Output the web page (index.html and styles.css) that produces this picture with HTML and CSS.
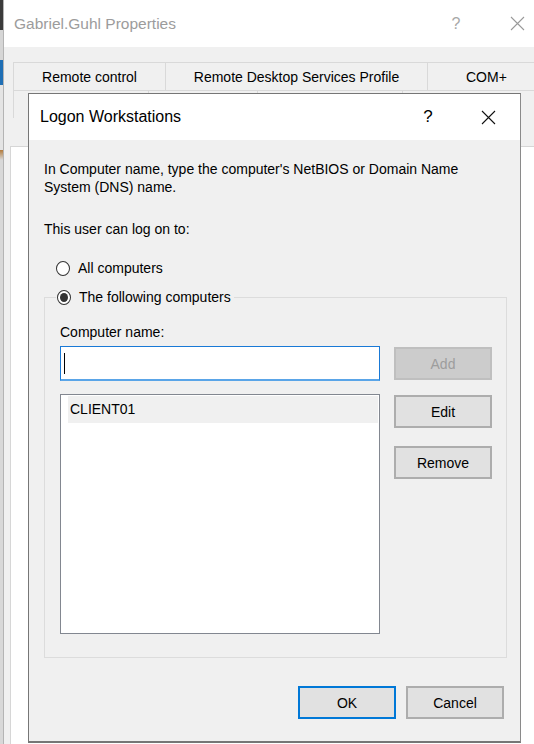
FILE: index.html
```html
<!DOCTYPE html>
<html>
<head>
<meta charset="utf-8">
<link rel="stylesheet" href="styles.css">
</head>
<body>
<div class="edge"></div>
<div class="win">
  <div class="win-title">
    <span class="win-title-text">Gabriel.Guhl Properties</span>
    <span class="tb-help">?</span>
    <span class="tb-close"><svg width="15" height="15" viewBox="0 0 15 15"><path d="M1 1L14 14M14 1L1 14" stroke="#9a9a9a" stroke-width="1.1" fill="none"/></svg></span>
  </div>
  <div class="tabs">
    <div class="tabrow">
      <div class="tab t1">Remote control</div>
      <div class="tab t2">Remote Desktop Services Profile</div>
      <div class="tab t3">COM+</div>
    </div>
    <div class="tabrow">
      <div class="tab r1"></div>
      <div class="tab r2"></div>
      <div class="tab r3"></div>
      <div class="tab r4"></div>
    </div>
  </div>
  <div class="page"></div>
</div>

<div class="dialog">
  <div class="dlg-title">
    <span class="dlg-title-text">Logon Workstations</span>
    <span class="dlg-help">?</span>
    <span class="dlg-close"><svg width="15" height="15" viewBox="0 0 15 15"><path d="M1 1L14 14M14 1L1 14" stroke="#111" stroke-width="1.1" fill="none"/></svg></span>
  </div>
  <div class="dlg-body">
    <p class="intro">In Computer name, type the computer's NetBIOS or Domain Name System (DNS) name.</p>
    <p class="lead">This user can log on to:</p>
    <div class="radio-row"><span class="radio"></span><span>All computers</span></div>
    <fieldset class="group">
      <legend class="legend"><span class="radio checked"></span><span>The following computers</span></legend>
      <div class="label">Computer name:</div>
      <div class="row-input">
        <div class="input"><span class="caret"></span></div>
        <div class="btn disabled">Add</div>
      </div>
      <div class="row-list">
        <div class="listbox">
          <div class="item">CLIENT01</div>
        </div>
        <div class="side-btns">
          <div class="btn">Edit</div>
          <div class="btn">Remove</div>
        </div>
      </div>
    </fieldset>
    <div class="footer">
      <div class="btn default">OK</div>
      <div class="btn">Cancel</div>
    </div>
  </div>
</div>
</body>
</html>
```
FILE: styles.css
```css
html, body {
  margin: 0;
  padding: 0;
}
body {
  width: 534px;
  height: 744px;
  overflow: hidden;
  display: flex;
  font-family: "Liberation Sans", Arial, sans-serif;
  font-size: 14px;
  color: #000;
  background: #d8d8d8;
  position: relative;
}
.edge {
  width: 3px;
  flex: none;
  background: linear-gradient(#3b3b3b 0, #3b3b3b 30px, #d6d6d6 30px, #d6d6d6 60px, #1f6fb5 60px, #1f6fb5 85px, #e4e4e4 85px, #e4e4e4 150px, #b27a3a 150px, #d8d8d8 160px);
}
.win {
  flex: 1;
  display: flex;
  flex-direction: column;
  background: #f0f0f0;
  border-left: 1px solid #b4b4b4;
  min-width: 0;
}
.win-title {
  height: 47px;
  flex: none;
  background: #fff;
  display: flex;
  align-items: center;
  padding-left: 10px;
  color: #9c9c9c;
  font-size: 15.5px;
}
.win-title-text {
  flex: 1;
}
.tb-help {
  width: 40px;
  text-align: center;
  font-size: 16px;
  color: #a8a8a8;
}
.tb-close {
  width: 46px;
  margin-left: 18px;
  margin-right: -6px;
  display: flex;
  justify-content: center;
}
.tabs {
  margin: 15px 0 0 9px;
}
.tabrow {
  display: flex;
  height: 28px;
}
.tab {
  box-sizing: border-box;
  border: 1px solid #d9d9d9;
  border-bottom: none;
  margin-right: -1px;
  display: flex;
  align-items: center;
  justify-content: center;
  background: #f0f0f0;
  white-space: nowrap;
}
.t1 { width: 153px; }
.t2 { width: 263px; }
.t3 { flex: 1; justify-content: flex-start; padding-left: 38px; }
.r1 { width: 136px; }
.r2 { width: 110px; }
.r3 { width: 146px; }
.r4 { flex: 1; }
.page {
  flex: 1;
  margin: 28px 0 0 6px;
  background: #fff;
  border-left: 1px solid #d6d6d6;
  border-top: 1px solid #d6d6d6;
}

/* dialog window */
.dialog {
  position: absolute;
  left: 28px;
  top: 93px;
  width: 493px;
  height: 650px;
  box-sizing: border-box;
  border: 1px solid #767676;
  border-bottom-width: 2px;
  border-right-color: #8a8a8a;
  display: flex;
  flex-direction: column;
  background: #f0f0f0;
}
.dlg-title {
  height: 46px;
  flex: none;
  background: #fff;
  display: flex;
  align-items: center;
  padding-left: 11px;
  font-size: 16px;
}
.dlg-title-text {
  flex: 1;
}
.dlg-help {
  width: 40px;
  text-align: center;
  font-size: 17px;
}
.dlg-close {
  width: 46px;
  margin-left: 17px;
  margin-right: 9px;
  display: flex;
  justify-content: center;
}
.dlg-body {
  flex: 1;
  display: flex;
  flex-direction: column;
  padding: 20px 13px 0 15px;
  line-height: 18px;
}
.intro {
  margin: 0;
  padding-right: 30px;
}
.lead {
  margin: 24px 0 0;
}
.radio-row {
  margin: 21px 0 0 12px;
  display: flex;
  align-items: center;
  gap: 8px;
}
.radio {
  width: 12px;
  height: 13px;
  border: 1px solid #333;
  border-radius: 50%;
  background: #fff;
  display: inline-flex;
  align-items: center;
  justify-content: center;
  flex: none;
}
.radio.checked::after {
  content: "";
  width: 8px;
  height: 9px;
  border-radius: 50%;
  background: #333;
}
.group {
  margin: 11px 0 0;
  border: 1px solid #dcdcdc;
  padding: 0 14px 23px 15px;
  min-width: 0;
}
.legend {
  margin-left: -4px;
  padding: 0 3px 0 1px;
  display: flex;
  align-items: center;
  gap: 8px;
}
.label {
  margin-top: 17px;
}
.row-input {
  display: flex;
  align-items: flex-start;
  gap: 14px;
  margin-top: 5px;
}
.input {
  width: 320px;
  height: 35px;
  box-sizing: border-box;
  background: #fff;
  border: 1px solid #1979d6;
  border-bottom: 2px solid #5aa5e8;
  position: relative;
  display: flex;
  align-items: center;
  padding-left: 3px;
}
.caret {
  width: 1px;
  height: 21px;
  background: #000;
}
.btn {
  width: 98px;
  height: 33px;
  box-sizing: border-box;
  background: #e1e1e1;
  border: 2px solid #adadad;
  display: flex;
  align-items: center;
  justify-content: center;
}
.row-input .btn {
  margin-top: 1px;
}
.btn.disabled {
  background: #cccccc;
  border-color: #bfbfbf;
  color: #9d9d9d;
}
.btn.default {
  border-color: #0078d7;
}
.row-list {
  display: flex;
  align-items: flex-start;
  gap: 14px;
  margin-top: 13px;
}
.listbox {
  width: 320px;
  height: 240px;
  box-sizing: border-box;
  background: #fff;
  border: 1px solid #828790;
  padding: 1px 1px 0 7px;
}
.item {
  height: 27px;
  line-height: 27px;
  background: #f0f0f0;
  padding-left: 2px;
}
.side-btns {
  display: flex;
  flex-direction: column;
  gap: 18px;
  margin-top: 1px;
}
.footer {
  display: flex;
  justify-content: flex-end;
  gap: 10px;
  margin-top: 28px;
  padding-right: 3px;
}
```
